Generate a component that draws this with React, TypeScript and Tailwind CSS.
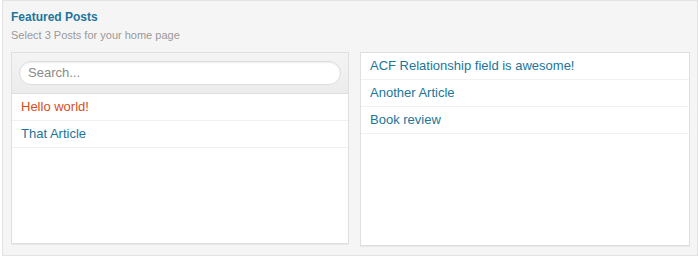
import React from 'react';

const LEFT_POSTS = [
  { id: 1, title: 'Hello world!', active: true },
  { id: 2, title: 'That Article', active: false },
];

const RIGHT_POSTS = [
  { id: 3, title: 'ACF Relationship field is awesome!' },
  { id: 4, title: 'Another Article' },
  { id: 5, title: 'Book review' },
];

const font = { fontFamily: '"Liberation Sans", Arial, sans-serif' };

const App: React.FC = () => {
  return (
    <div className="w-[700px] h-[257px] bg-white" style={font}>
      <div className="mx-[2px] h-[256px] border border-[#e3e3e3] bg-[#f5f5f5] pl-[8px] pr-[7px] pt-[9px]">
        <h2 className="text-[12px] leading-[15px] font-bold text-[#21759b]">Featured Posts</h2>
        <p className="mt-[3px] text-[11px] leading-[14px] text-[#999]">Select 3 Posts for your home page</p>

        <div className="mt-[10px] flex gap-[11px]">
          <div className="w-[338px] h-[192px] border border-[#dfdfdf] bg-white shadow-[0_1px_0_#e8e8e8]">
            <div className="h-[41px] px-[7px] pt-[7px] bg-gradient-to-b from-[#f4f4f4] to-[#ececec] border-b border-[#dfdfdf]">
              <input
                type="text"
                placeholder="Search..."
                className="w-full h-[24px] rounded-full border border-[#dcdcdc] bg-white px-[8px] text-[13px] text-[#333] placeholder:text-[#8a8a8a] outline-none shadow-[inset_0_1px_2px_rgba(0,0,0,0.07)]"
                style={font}
              />
            </div>
            <ul>
              {LEFT_POSTS.map(p => (
                <li
                  key={p.id}
                  className={`h-[27px] px-[9px] border-b border-[#f1f1f1] text-[13px] leading-[25px] ${p.active ? 'text-[#d54e21]' : 'text-[#21759b]'}`}
                >
                  {p.title}
                </li>
              ))}
            </ul>
          </div>

          <div className="flex-1 h-[194px] border border-[#dfdfdf] bg-white shadow-[0_1px_0_#e8e8e8]">
            <ul>
              {RIGHT_POSTS.map(p => (
                <li
                  key={p.id}
                  className="h-[27px] px-[9px] border-b border-[#f1f1f1] text-[13px] leading-[26px] text-[#21759b]"
                >
                  {p.title}
                </li>
              ))}
            </ul>
          </div>
        </div>
      </div>
    </div>
  );
};

export default App;
